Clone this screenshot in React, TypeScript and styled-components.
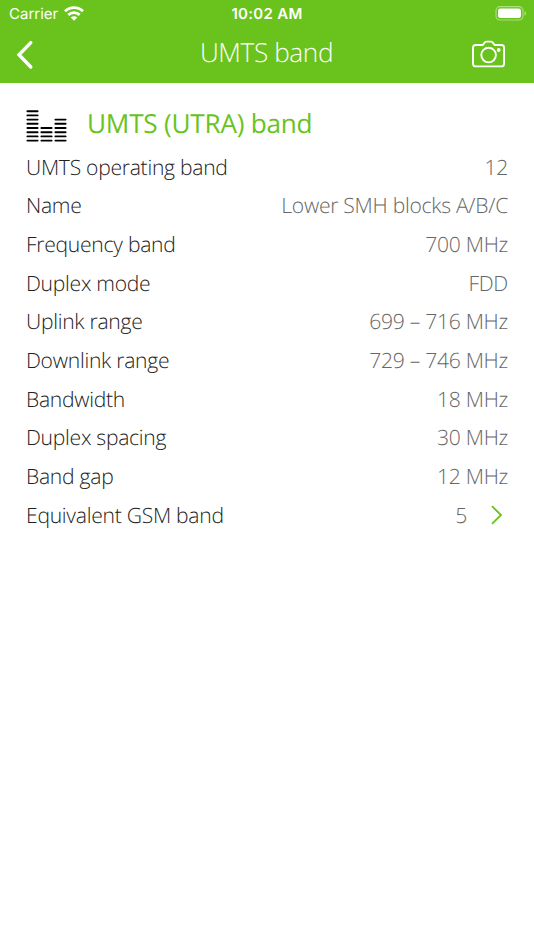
import React from "react";
import styled, { createGlobalStyle } from "styled-components";

const GlobalStyle = createGlobalStyle`
  *, *::before, *::after { box-sizing: border-box; }
  body {
    margin: 0;
    background: #fff;
    font-family: "Open Sans", sans-serif;
    text-rendering: geometricPrecision;
  }
`;

const Screen = styled.div`
  width: 534px;
  height: 950px;
  overflow: hidden;
  background: #fff;
`;

const Header = styled.header`
  height: 83px;
  background: #69c31c;
  color: #fff;
`;

const StatusBar = styled.div`
  height: 27px;
  display: grid;
  grid-template-columns: 1fr auto 1fr;
  align-items: center;
  padding: 0 7px 0 9px;
  font-family: Inter, sans-serif;
  font-size: 15px;
  line-height: 27px;
`;

const Carrier = styled.div`
  display: flex;
  align-items: center;
  gap: 6px;
  height: 26px;
`;

const Clock = styled.div`
  font-weight: 600;
  letter-spacing: 0.3px;
  padding-right: 2px;
`;

const BatteryIcon = styled.svg`
  justify-self: end;
  display: block;
`;

const NavBar = styled.nav`
  height: 56px;
  display: grid;
  grid-template-columns: 60px 1fr 62px;
  align-items: center;
`;

const NavButton = styled.button<{ $side: "left" | "right" }>`
  display: flex;
  justify-content: ${(p) => (p.$side === "left" ? "flex-start" : "flex-end")};
  padding: ${(p) => (p.$side === "left" ? "0 0 0 15px" : "0 28px 2px 0")};
  border: 0;
  background: none;
  color: inherit;
`;

const NavTitle = styled.h1`
  margin: 0;
  padding: 0 0 6px 1px;
  text-align: center;
  font-size: 26.2px;
  line-height: 36px;
  font-weight: 300;
  letter-spacing: -0.4px;
`;

const Content = styled.main`
  padding: 20px 26px 0;
`;

const SectionHead = styled.div`
  height: 44.8px;
  display: flex;
  align-items: flex-start;
  gap: 20px;
`;

const BarsIcon = styled.svg`
  display: block;
  margin-top: 7px;
`;

const SectionTitle = styled.h2`
  margin: 0;
  color: #69c31c;
  font-size: 26.2px;
  line-height: 40px;
  font-weight: 400;
  letter-spacing: -0.25px;
`;

const Row = styled.div`
  height: 38.7px;
  display: flex;
  justify-content: space-between;
  align-items: center;
  font-size: 21.1px;
  font-weight: 300;
  letter-spacing: -0.27px;
  white-space: nowrap;
`;

const Label = styled.span`
  color: #222;
`;

const Value = styled.span`
  display: flex;
  align-items: center;
  color: #666;
`;

const Chevron = styled.svg`
  margin: 0 5px 0 23px;
`;

const columns = [
  { x: 1, count: 8 },
  { x: 15, count: 4 },
  { x: 29, count: 6 },
];

const rows = [
  { label: "UMTS operating band", value: "12" },
  { label: "Name", value: "Lower SMH blocks A/B/C" },
  { label: "Frequency band", value: "700 MHz" },
  { label: "Duplex mode", value: "FDD" },
  { label: "Uplink range", value: "699 – 716 MHz" },
  { label: "Downlink range", value: "729 – 746 MHz" },
  { label: "Bandwidth", value: "18 MHz" },
  { label: "Duplex spacing", value: "30 MHz" },
  { label: "Band gap", value: "12 MHz" },
  { label: "Equivalent GSM band", value: "5", link: true },
];

export default function App() {
  return (
    <Screen>
      <GlobalStyle />
      <Header>
        <StatusBar>
          <Carrier>
            Carrier
            <svg width="20" height="15" viewBox="0 0 20 15" fill="none" stroke="#fff" strokeWidth="2.8">
              <path d="M1 5.2C6.2.3 13.8.3 19 5.2" />
              <path d="M4.3 8.9c3.3-3 8.1-3 11.4 0" />
              <path d="M10 14.7 6.7 11.6c1.9-1.7 4.7-1.7 6.6 0Z" fill="#fff" stroke="none" />
            </svg>
          </Carrier>
          <Clock>10:02 AM</Clock>
          <BatteryIcon width="32" height="15" viewBox="0 0 32 15">
            <rect x="1" y=".6" width="27" height="13.4" rx="4" fill="none" stroke="#fff" strokeOpacity=".45" strokeWidth="1.1" />
            <rect x="3" y="2.6" width="23" height="9.4" rx="2.3" fill="#fff" />
            <path d="M29.6 5v4.7c1.9-.8 1.9-3.9 0-4.7Z" fill="#fff" fillOpacity=".5" />
          </BatteryIcon>
        </StatusBar>
        <NavBar>
          <NavButton $side="left" aria-label="Back">
            <svg width="20" height="30" viewBox="0 0 20 30" fill="none" stroke="#fff" strokeWidth="3.4" strokeLinecap="round" strokeLinejoin="miter">
              <path d="M15.8 2.6 4 14.8 15.8 27" />
            </svg>
          </NavButton>
          <NavTitle>UMTS band</NavTitle>
          <NavButton $side="right" aria-label="Camera">
            <svg width="34" height="28" viewBox="0 0 34 28" fill="none" stroke="#fff" strokeWidth="1.9">
              <path d="M4 5h6.3c1.6 0 1.8-3.4 4-3.4h4.8c2.2 0 2.4 3.4 4 3.4h6.3q2.7 0 2.7 2.7v16q0 2.7-2.7 2.7H3.7Q1 26.4 1 23.7v-16Q1 5 3.7 5Z" />
              <circle cx="16.6" cy="15.1" r="7.3" />
              <circle cx="26.7" cy="10" r="1.9" fill="#fff" stroke="none" />
            </svg>
          </NavButton>
        </NavBar>
      </Header>
      <Content>
        <SectionHead>
          <BarsIcon width="41" height="32" viewBox="0 0 41 32" stroke="#000" strokeWidth="1.9" strokeLinecap="round">
            {columns.map((c) =>
              Array.from({ length: c.count }, (_, i) => (
                <path key={`${c.x}-${i}`} d={`M${c.x + 0.4} ${30.6 - i * 4.2}h10.2`} />
              ))
            )}
          </BarsIcon>
          <SectionTitle>UMTS (UTRA) band</SectionTitle>
        </SectionHead>
        {rows.map((r) => (
          <Row key={r.label}>
            <Label>{r.label}</Label>
            <Value>
              {r.value}
              {r.link && (
                <Chevron width="13" height="20" viewBox="0 0 13 20" fill="none" stroke="#69c31c" strokeWidth="1.8">
                  <path d="M2 1.2 11 10l-9 8.8" />
                </Chevron>
              )}
            </Value>
          </Row>
        ))}
      </Content>
    </Screen>
  );
}
